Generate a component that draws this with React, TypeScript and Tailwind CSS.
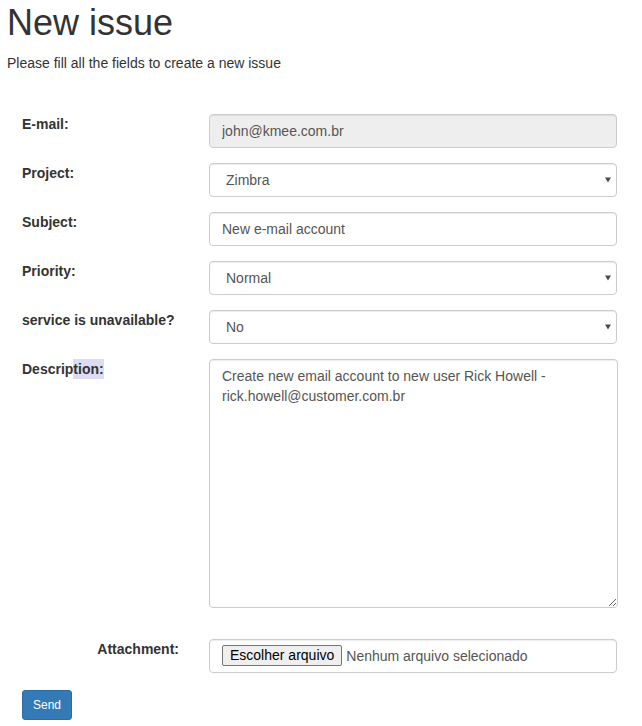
import { ReactNode } from "react";

const inputBase =
	"h-[34px] w-[408px] rounded-[4px] border border-[#ccc] px-[12px] text-[14px] leading-[20px] text-[#555] shadow-[inset_0_1px_1px_rgba(0,0,0,0.075)] outline-none";

function Row({ label, children, right }: { label: ReactNode; children: ReactNode; right?: boolean }) {
	return (
		<div className="flex items-start">
			<div
				className={
					"w-[187px] shrink-0 px-[15px] text-[14px] font-bold leading-[20px] text-[#333] " +
					(right ? "text-right" : "")
				}
			>
				{label}
			</div>
			<div className="px-[15px]">{children}</div>
		</div>
	);
}

function Select({ value }: { value: string }) {
	return (
		<div className="relative">
			<select
				defaultValue={value}
				className={inputBase + " appearance-none bg-white pl-[16px]"}
			>
				<option>{value}</option>
			</select>
			{/* native-style dropdown arrow */}
			<svg
				className="pointer-events-none absolute right-[6px] top-[14px]"
				width="6"
				height="6"
				viewBox="0 0 6 6"
			>
				<path d="M0 0.5 H6 L3 5.5 Z" fill="#4a4a4a" />
			</svg>
		</div>
	);
}

export default function App() {
	return (
		<div className="min-h-[726px] bg-white pl-[7px] pt-[3px] font-['Liberation_Sans',Arial,sans-serif] text-[14px] leading-[20px] text-[#333]">
			<h1 className="mb-[10px] text-[36px] font-normal leading-[39.6px] text-[#333]">New issue</h1>
			<p>Please fill all the fields to create a new issue</p>

			<form className="mt-[41px] flex flex-col" onSubmit={(e) => e.preventDefault()}>
				<div className="mb-[15px]">
					<Row label="E-mail:">
						<input
							readOnly
							value="john@kmee.com.br"
							className={inputBase + " bg-[#eee]"}
						/>
					</Row>
				</div>
				<div className="mb-[15px]">
					<Row label="Project:">
						<Select value="Zimbra" />
					</Row>
				</div>
				<div className="mb-[15px]">
					<Row label="Subject:">
						<input defaultValue="New e-mail account" className={inputBase + " bg-white"} />
					</Row>
				</div>
				<div className="mb-[15px]">
					<Row label="Priority:">
						<Select value="Normal" />
					</Row>
				</div>
				<div className="mb-[15px]">
					<Row label="service is unavailable?">
						<Select value="No" />
					</Row>
				</div>
				<div className="mb-[31px]">
					<Row
						label={
							<>
								Descrip
								<span className="inline-block bg-[#dcddf4] leading-[20px]">tion:</span>
							</>
						}
					>
						<textarea
							defaultValue={"Create new email account to new user Rick Howell - rick.howell@customer.com.br"}
							className="block h-[249px] w-[409px] resize-y rounded-[4px] border border-[#ccc] bg-white px-[12px] py-[6px] text-[14px] leading-[20px] text-[#555] shadow-[inset_0_1px_1px_rgba(0,0,0,0.075)] outline-none"
						/>
					</Row>
				</div>
				<div className="mb-[17px]">
					<Row label="Attachment:" right>
						<div className="flex h-[34px] w-[408px] items-center rounded-[4px] border border-[#ccc] bg-white px-[12px] shadow-[inset_0_1px_1px_rgba(0,0,0,0.075)]">
							<button
								type="button"
								className="flex h-[21px] items-center rounded-[2px] border border-[#767676] bg-[#efefef] px-[7px] text-[14px] leading-[17px] text-black"
							>
								Escolher arquivo
							</button>
							<span className="ml-[4px] text-[14px] text-[#555]">Nenhum arquivo selecionado</span>
						</div>
					</Row>
				</div>
				<div className="pl-[15px]">
					<button
						type="submit"
						className="h-[30px] w-[50px] rounded-[3px] border border-[#2e6da4] bg-[#337ab7] text-[12px] leading-[18px] text-white"
					>
						Send
					</button>
				</div>
			</form>
		</div>
	);
}
